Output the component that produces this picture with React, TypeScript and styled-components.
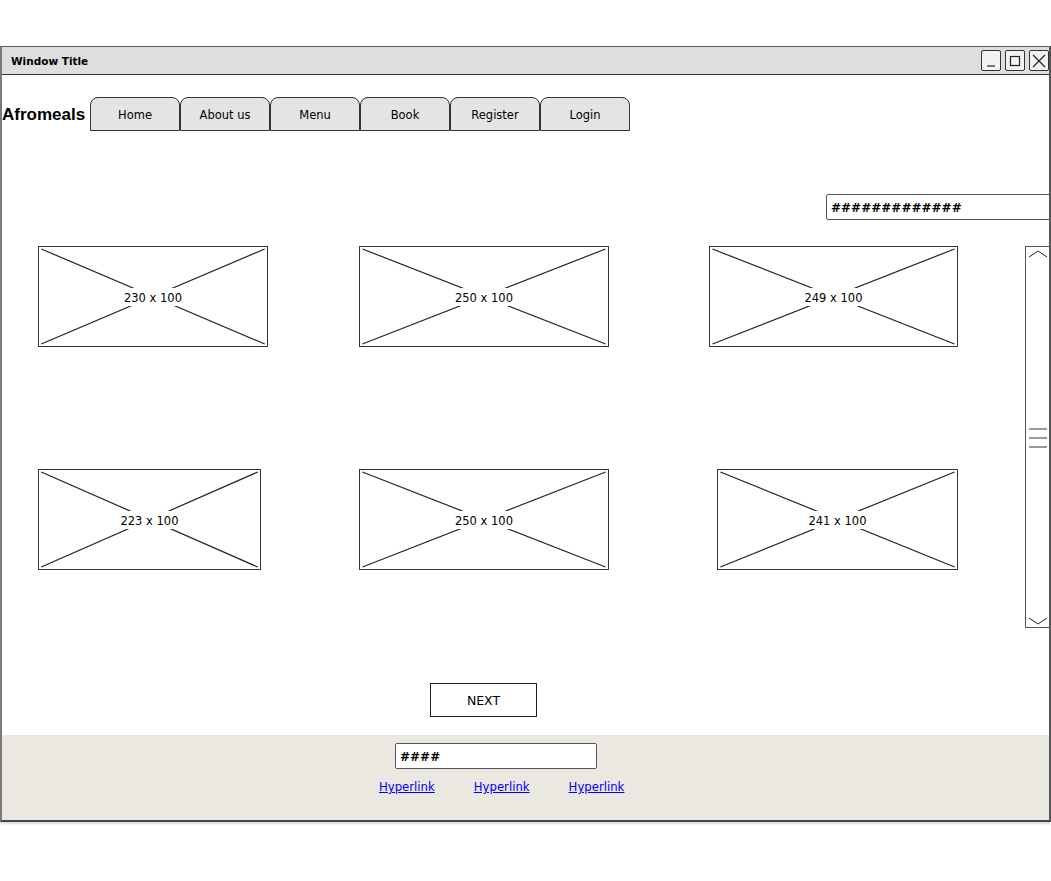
import React from "react";
import styled, { createGlobalStyle } from "styled-components";

const GlobalStyle = createGlobalStyle`
  html, body { margin: 0; padding: 0; background: #ffffff; }
  body { font-family: "DejaVu Sans", "Liberation Sans", sans-serif; color: #000; }
  * { box-sizing: border-box; }
`;

const Page = styled.div`
  padding-top: 46px;
  width: 1051px;
  height: 881px;
  overflow: hidden;
`;

const Window = styled.div`
  width: 1051px;
  height: 776px;
  display: flex;
  flex-direction: column;
  border-top: 1px solid #5a5a5a;
  border-left: 2px solid #7a7a7a;
  border-right: 2px solid #555;
  border-bottom: 2px solid #444;
  box-shadow: 0 2px 2px rgba(0, 0, 0, 0.15);
  overflow: hidden;
  background: #fff;
`;

const TitleBar = styled.div`
  height: 28px;
  flex: none;
  display: flex;
  align-items: center;
  justify-content: space-between;
  background: #dedede;
  border-bottom: 1px solid #333;
  padding: 0 0 0 9px;
`;

const Title = styled.span`
  font-weight: bold;
  font-size: 10.5px;
  padding-top: 1px;
`;

const Controls = styled.div`
  display: flex;
  gap: 4px;
`;

const CtrlBtn = styled.div`
  width: 20px;
  height: 21px;
  border: 1px solid #333;
  border-radius: 2px;
  background: #f2f2f2;
  display: flex;
  align-items: center;
  justify-content: center;
`;

const Body = styled.div`
  flex: 1;
  display: flex;
  flex-direction: column;
`;

const NavRow = styled.div`
  display: flex;
  align-items: center;
  margin-top: 22px;
  height: 34px;
`;

const Logo = styled.span`
  font-family: "Liberation Sans", Arial, sans-serif;
  font-weight: bold;
  font-size: 17px;
  width: 88px;
  padding-top: 2px;
`;

const Tabs = styled.div`
  display: flex;
`;

const Tab = styled.div`
  width: 90px;
  height: 34px;
  border: 1px solid #333;
  border-radius: 8px 8px 0 0;
  background: #e4e4e4;
  display: flex;
  align-items: center;
  justify-content: center;
  font-size: 11.5px;
  padding-top: 2px;
`;

const SearchRow = styled.div`
  margin-top: 63px;
  padding-left: 824px;
`;

const TextInput = styled.div<{ $w: number }>`
  width: ${(p) => p.$w}px;
  height: 26px;
  border: 1px solid #555;
  border-radius: 2px;
  background: #fff;
  display: flex;
  align-items: center;
  padding: 2px 0 0 4px;
  font-size: 12px;
  font-weight: bold;
`;

const MainRow = styled.div`
  margin-top: 26px;
  display: flex;
  align-items: flex-start;
  height: 382px;
`;

const Grid = styled.div`
  padding-left: 36px;
  display: grid;
  grid-template-columns: 321px 350px 249px;
  grid-auto-rows: 101px;
  row-gap: 122px;
`;

const Placeholder = styled.div<{ $w: number; $end?: boolean }>`
  position: relative;
  width: ${(p) => p.$w}px;
  height: 101px;
  border: 1px solid #333;
  background: #fff;
  justify-self: ${(p) => (p.$end ? "end" : "start")};
  display: flex;
  align-items: center;
  justify-content: center;
`;

const Cross = styled.svg`
  position: absolute;
  inset: 0;
  width: 100%;
  height: 100%;
`;

const PhLabel = styled.span`
  position: relative;
  background: #fff;
  font-size: 11.5px;
  padding: 3px 3px 1px;
`;

const Scrollbar = styled.div`
  margin-left: 67px;
  width: 26px;
  height: 382px;
  border: 1px solid #555;
  border-right: none;
  display: flex;
  flex-direction: column;
  justify-content: space-between;
  align-items: center;
  padding: 3px 0 2px;
`;

const NextRow = styled.div`
  margin-top: 55px;
  padding-left: 428px;
`;

const NextButton = styled.div`
  width: 107px;
  height: 34px;
  border: 1px solid #222;
  display: flex;
  align-items: center;
  justify-content: center;
  font-size: 12.5px;
  background: #fff;
  padding-top: 1px;
`;

const Footer = styled.div`
  height: 85px;
  flex: none;
  background: #ebe8e2;
  padding-top: 8px;
  display: flex;
  flex-direction: column;
`;

const FooterInputWrap = styled.div`
  padding-left: 393px;
`;

const Links = styled.div`
  display: flex;
  gap: 39px;
  padding-left: 377px;
  margin-top: 11px;
`;

const Link = styled.a`
  color: #0000ff;
  text-decoration: underline;
  font-size: 11.7px;
  cursor: pointer;
`;

const images = [
  { w: 230 },
  { w: 250 },
  { w: 249 },
  { w: 223 },
  { w: 250 },
  { w: 241, end: true },
];

const tabs = ["Home", "About us", "Menu", "Book", "Register", "Login"];

export default function App() {
  return (
    <>
      <GlobalStyle />
      <Page>
        <Window>
          <TitleBar>
            <Title>Window Title</Title>
            <Controls>
              <CtrlBtn>
                <svg width="12" height="12" viewBox="0 0 12 12">
                  <line x1="2" y1="11" x2="10" y2="11" stroke="#222" strokeWidth="1.2" />
                </svg>
              </CtrlBtn>
              <CtrlBtn>
                <svg width="12" height="12" viewBox="0 0 12 12">
                  <rect x="1.5" y="1.5" width="9" height="9" fill="none" stroke="#222" strokeWidth="1.2" />
                </svg>
              </CtrlBtn>
              <CtrlBtn>
                <svg width="16" height="16" viewBox="0 0 16 16">
                  <path d="M2 2 L14 14 M14 2 L2 14" stroke="#222" strokeWidth="1.2" />
                </svg>
              </CtrlBtn>
            </Controls>
          </TitleBar>
          <Body>
            <NavRow>
              <Logo>Afromeals</Logo>
              <Tabs>
                {tabs.map((t) => (
                  <Tab key={t}>{t}</Tab>
                ))}
              </Tabs>
            </NavRow>
            <SearchRow>
              <TextInput $w={240}>#############</TextInput>
            </SearchRow>
            <MainRow>
              <Grid>
                {images.map((im, i) => (
                  <Placeholder key={i} $w={im.w} $end={im.end}>
                    <Cross viewBox="0 0 100 100" preserveAspectRatio="none">
                      <path d="M1 2 L99 98 M99 2 L1 98" stroke="#222" strokeWidth="1.2" vectorEffect="non-scaling-stroke" fill="none" />
                    </Cross>
                    <PhLabel>{im.w} x 100</PhLabel>
                  </Placeholder>
                ))}
              </Grid>
              <Scrollbar>
                <svg width="20" height="8" viewBox="0 0 20 8">
                  <path d="M1 7 L10 1 L19 7" stroke="#222" strokeWidth="1" fill="none" />
                </svg>
                <svg width="20" height="22" viewBox="0 0 20 22">
                  <path d="M1 2 H19 M1 11 H19 M1 20 H19" stroke="#333" strokeWidth="1" fill="none" />
                </svg>
                <svg width="20" height="8" viewBox="0 0 20 8">
                  <path d="M1 1 L10 7 L19 1" stroke="#222" strokeWidth="1" fill="none" />
                </svg>
              </Scrollbar>
            </MainRow>
            <NextRow>
              <NextButton>NEXT</NextButton>
            </NextRow>
          </Body>
          <Footer>
            <FooterInputWrap>
              <TextInput $w={202}>####</TextInput>
            </FooterInputWrap>
            <Links>
              <Link>Hyperlink</Link>
              <Link>Hyperlink</Link>
              <Link>Hyperlink</Link>
            </Links>
          </Footer>
        </Window>
      </Page>
    </>
  );
}
